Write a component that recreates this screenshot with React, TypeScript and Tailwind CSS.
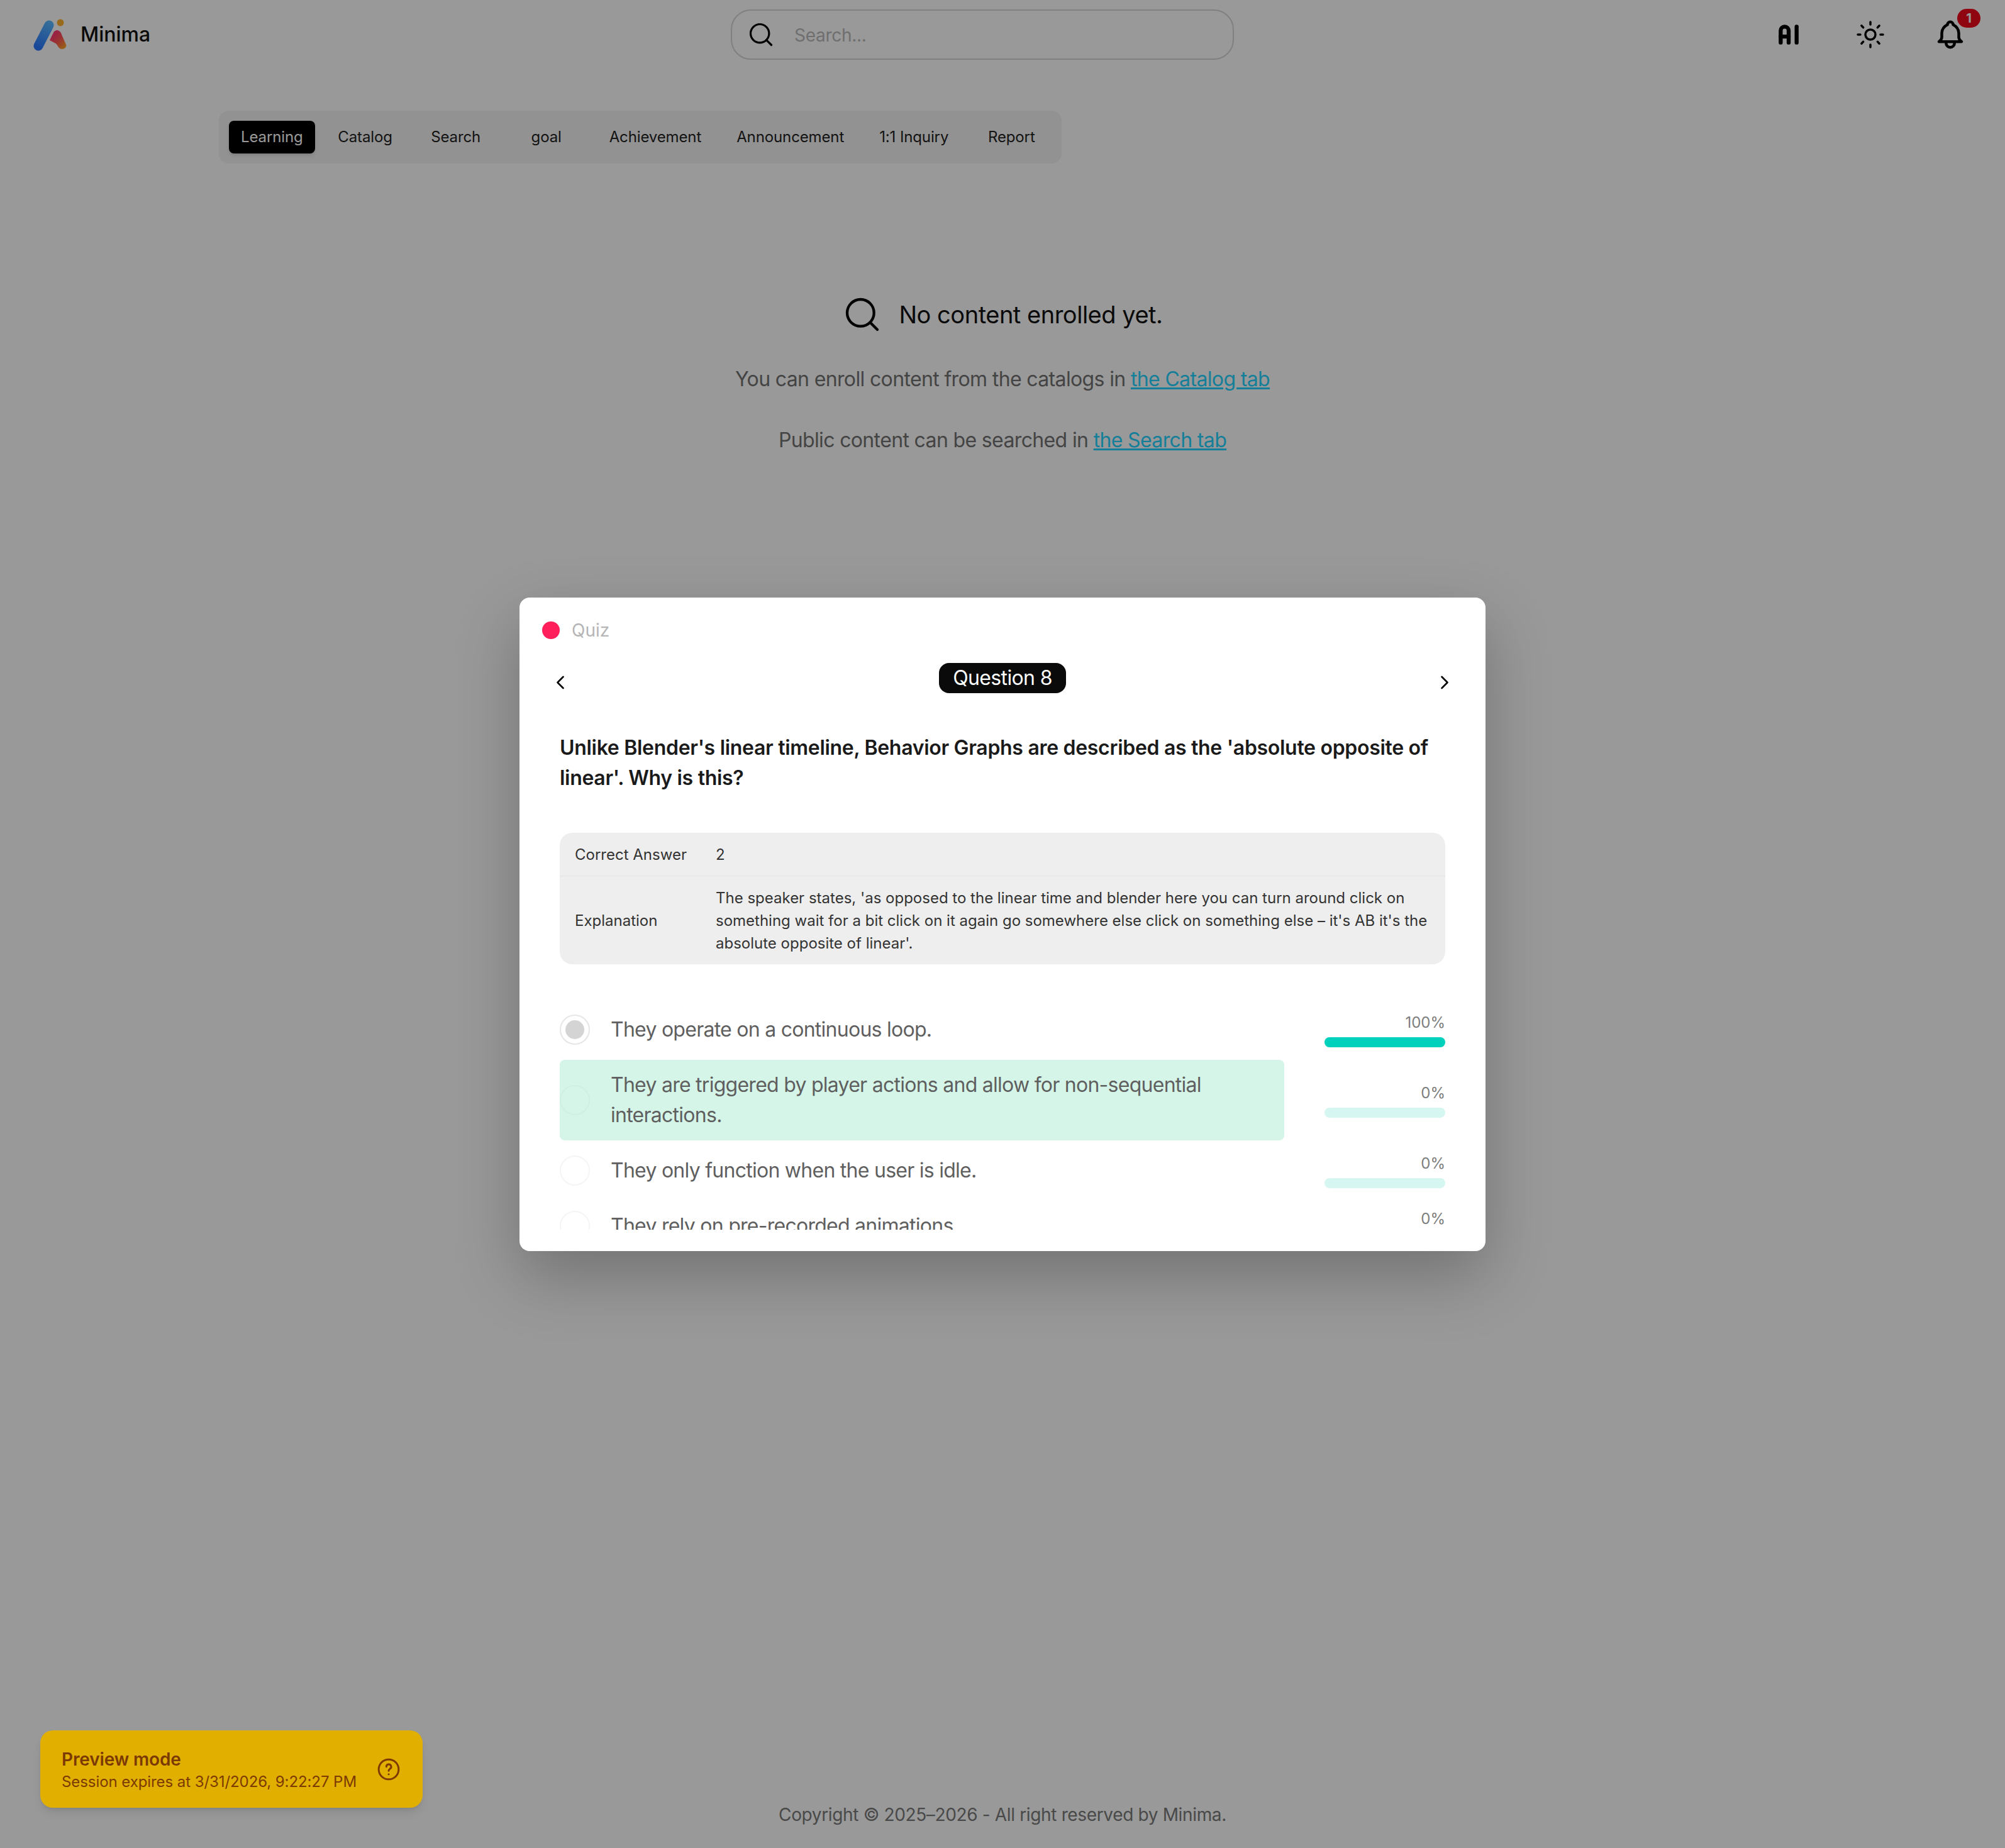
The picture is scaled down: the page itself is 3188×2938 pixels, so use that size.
import { ChevronLeft, ChevronRight, Search, Sun } from "lucide-react";
import { TbAi, TbBell } from "react-icons/tb";

const tabs = ["Learning", "Catalog", "Search", "goal", "Achievement", "Announcement", "1:1 Inquiry", "Report"];

const options = [
  { text: "They operate on a continuous loop.", percent: 100, selected: true },
  { text: "They are triggered by player actions and allow for non-sequential interactions.", percent: 0, correct: true },
  { text: "They only function when the user is idle.", percent: 0 },
  { text: "They rely on pre-recorded animations.", percent: 0 },
];

function Logo() {
  return (
    <svg width="60" height="54" viewBox="0 0 60 54" fill="none">
      <defs>
        <linearGradient id="logoBlue" x1="26" y1="8" x2="8" y2="48" gradientUnits="userSpaceOnUse">
          <stop offset="0" stopColor="#58b8ff" />
          <stop offset="1" stopColor="#2a78ff" />
        </linearGradient>
        <linearGradient id="logoRed" x1="30" y1="22" x2="54" y2="48" gradientUnits="userSpaceOnUse">
          <stop offset="0" stopColor="#ff2a80" />
          <stop offset="0.55" stopColor="#ff5a50" />
          <stop offset="1" stopColor="#ffb020" />
        </linearGradient>
      </defs>
      <path d="M38 20 C42 20 45 23 46 27 L53 43 C55 49 45 53 41 47 L30 30 Z" fill="url(#logoRed)" />
      <path d="M27 36 L34 22 L38 20 L42 44 Z" fill="url(#logoRed)" />
      <path d="M9 45 L26 12" stroke="url(#logoBlue)" strokeWidth="15" strokeLinecap="round" />
      <circle cx="44" cy="8" r="5.5" fill="#ffb030" />
    </svg>
  );
}

function OptionRow({ option }: { option: (typeof options)[number] }) {
  return (
    <div className="flex items-center gap-16">
      <div className={`flex flex-1 items-center gap-[33px] rounded-lg py-4 ${option.correct ? "bg-[#d5f5e8]" : ""}`}>
        <div
          className={`flex size-12 shrink-0 items-center justify-center rounded-full border-2 ${
            option.selected ? "border-[#e6e6e6]" : option.correct ? "border-[#cfefe2]" : "border-[#f5f5f5]"
          }`}
        >
          {option.selected && <div className="size-[30px] rounded-full bg-[#d4d4d4]" />}
        </div>
        <span className="text-[32px] leading-[48px] tracking-[-0.023em] text-[#5f5f5f]">{option.text}</span>
      </div>
      <div className="flex w-[192px] shrink-0 flex-col gap-[5px]">
        <span className="text-right text-2xl leading-9 text-[#7d7d7d]">{option.percent}%</span>
        <div className="h-4 rounded-full bg-[#d5f6f1]">
          <div className="h-4 rounded-full bg-[#00d1bc]" style={{ width: `${option.percent}%` }} />
        </div>
      </div>
    </div>
  );
}

export default function App() {
  return (
    <div className="relative flex min-h-[2938px] flex-col bg-white font-[Inter,sans-serif] text-black antialiased">
      <header className="grid h-[110px] grid-cols-[1110px_800px_1fr] items-center px-[52px]">
        <div className="flex items-center gap-4">
          <Logo />
          <span className="text-[32px] font-medium text-[#111]">Minima</span>
        </div>
        <div className="flex h-20 items-center gap-[31px] rounded-[32px] border-2 border-[#d5d5d5] pl-[24px] pr-6">
          <Search size={44} strokeWidth={1.75} className="shrink-0" />
          <input
            placeholder="Search..."
            className="w-full bg-transparent pt-[2px] text-[28px] tracking-[-0.01em] outline-none placeholder:text-[#b9b9b9]"
          />
        </div>
        <div className="flex items-center justify-end pr-[8px]">
          <TbAi size={76} />
          <Sun size={48} strokeWidth={1.75} className="ml-[68px] mr-[76px]" />
          <div className="relative">
            <TbBell size={54} />
            <span className="absolute -right-[21px] -top-[14px] flex h-[30px] w-[37px] items-center justify-center rounded-full bg-[#ee0a1c] text-xl font-bold text-white">
              1
            </span>
          </div>
        </div>
      </header>

      <nav className="ml-[348px] mt-[66px] flex w-fit gap-4 rounded-2xl bg-[#f3f3f3] p-4">
        {tabs.map((tab, i) => (
          <button
            key={tab}
            className={`h-[52px] min-w-[128px] rounded-lg text-2xl tracking-[-0.005em] ${
              i === 0 ? "bg-black px-[19px] text-white shadow-md" : "px-5 text-[#222]"
            }`}
          >
            {tab}
          </button>
        ))}
      </nav>

      <main className="mt-[208px] flex flex-col items-center">
        <div className="flex items-center gap-[26px]">
          <Search size={64} strokeWidth={1.6} />
          <h2 className="text-[38px] leading-[60px] tracking-[-0.0126em] text-[#111]">No content enrolled yet.</h2>
        </div>
        <p className="mt-[47px] text-[32px] leading-[48px] tracking-[-0.02em] text-[#727272]">
          You can enroll content from the catalogs in{" "}
          <a className="text-[#24d4ff] underline">the Catalog tab</a>
        </p>
        <p className="mt-[49px] text-[32px] leading-[48px] tracking-[-0.02em] text-[#727272]">
          Public content can be searched in <a className="text-[#24d4ff] underline">the Search tab</a>
        </p>
      </main>

      <footer className="mt-auto pb-8 text-center text-[28px] leading-[42px] tracking-[-0.0125em] text-[#7a7a7a]">
        Copyright © 2025–2026 - All right reserved by Minima.
      </footer>

      {/* overlay + quiz modal */}
      <div className="absolute inset-0 flex items-center justify-center bg-black/40">
        <div className="flex h-[1039px] w-[1536px] flex-col rounded-2xl bg-white pb-[34px] shadow-[0_40px_100px_rgba(0,0,0,0.25)]">
          <div className="flex items-center gap-[19px] pl-[36px] pt-[30px]">
            <div className="size-7 rounded-full bg-[#ff1f5a]" />
            <span className="text-[28px] leading-[44px] text-[#b5b5b5]">Quiz</span>
          </div>
          <div className="mt-[30px] flex items-start justify-between px-[47px]">
            <ChevronLeft size={36} strokeWidth={1.75} className="mt-[13px]" />
            <span className="flex h-12 items-center rounded-2xl bg-[#0a0a0a] px-[22px] text-[32px] tracking-[-0.02em] text-white">
              Question 8
            </span>
            <ChevronRight size={36} strokeWidth={1.75} className="mt-[13px]" />
          </div>
          <div className="flex min-h-0 flex-1 flex-col px-16">
            <h1 className="mt-[62px] text-[32px] font-semibold leading-[48px] tracking-[-0.0095em] text-[#1a1a1a]">
              Unlike Blender's linear timeline, Behavior Graphs are described as the 'absolute opposite of linear'. Why is
              this?
            </h1>
            <div className="mt-[63px] rounded-[20px] bg-[#eeeeee] text-2xl text-[#333]">
              <div className="flex h-[69px] items-center border-b border-[#e4e4e4] px-6 pt-[2px]">
                <span className="w-[224px] shrink-0">Correct Answer</span>
                <span>2</span>
              </div>
              <div className="flex items-center px-6 pb-[15px] pt-[17px]">
                <span className="w-[224px] shrink-0">Explanation</span>
                <p className="leading-9">
                  The speaker states, 'as opposed to the linear time and blender here you can turn around click on
                  something wait for a bit click on it again go somewhere else click on something else – it's AB it's the
                  absolute opposite of linear'.
                </p>
              </div>
            </div>
            <div className="mt-16 flex min-h-0 flex-1 flex-col gap-2 overflow-hidden">
              {options.map((option) => (
                <OptionRow key={option.text} option={option} />
              ))}
            </div>
          </div>
        </div>
      </div>

      {/* preview toast */}
      <div className="absolute bottom-[64px] left-16 flex h-[123px] w-[608px] items-center justify-between rounded-[20px] bg-[#e0af00] pl-[34px] pr-[34px] shadow-lg">
        <div className="text-[#7c3a00]">
          <p className="text-[28px] font-semibold leading-[40px] tracking-[-0.005em]">Preview mode</p>
          <p className="text-2xl leading-8 tracking-[-0.003em]">Session expires at 3/31/2026, 9:22:27 PM</p>
        </div>
        <svg width="40" height="40" viewBox="0 0 24 24" fill="none" stroke="#7c3a00" strokeWidth="1.8" strokeLinecap="round">
          <circle cx="12" cy="12" r="9.5" />
          <path d="M9.8 9.5a2.3 2.3 0 1 1 3.4 2c-.8.5-1.2 1-1.2 1.8" />
          <path d="M12 16.6v.1" />
        </svg>
      </div>
    </div>
  );
}
